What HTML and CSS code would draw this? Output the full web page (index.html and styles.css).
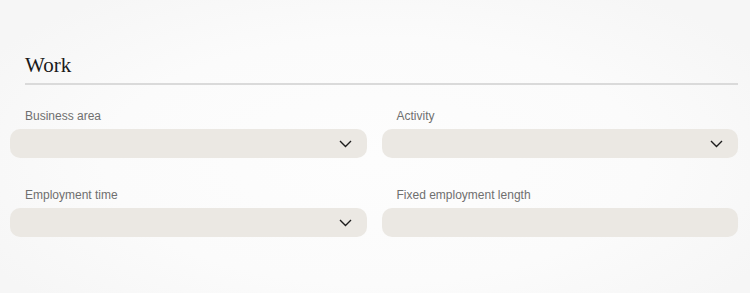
FILE: index.html
```html
<!DOCTYPE html>
<html lang="en">
<head>
    <meta charset="UTF-8">
    <meta name="viewport" content="width=device-width, initial-scale=1.0">
    <title>Work</title>
    <link rel="stylesheet" href="styles.css">
</head>
<body>
    <!-- Work section -->
    <div class="section">
        <h2 class="section-title">Work</h2>

        <div class="form-grid">
            <div class="field">
                <label class="field-label">Business area</label>
                <div class="field-input">
                    <svg class="chevron" viewBox="0 0 13 8" width="13" height="8"><path d="M1 1l5.5 5.5 5.5-5.5" fill="none" stroke="#1d1d1d" stroke-width="1.4"/></svg>
                </div>
            </div>
            <div class="field">
                <label class="field-label">Activity</label>
                <div class="field-input">
                    <svg class="chevron" viewBox="0 0 13 8" width="13" height="8"><path d="M1 1l5.5 5.5 5.5-5.5" fill="none" stroke="#1d1d1d" stroke-width="1.4"/></svg>
                </div>
            </div>
            <div class="field">
                <label class="field-label">Employment time</label>
                <div class="field-input">
                    <svg class="chevron" viewBox="0 0 13 8" width="13" height="8"><path d="M1 1l5.5 5.5 5.5-5.5" fill="none" stroke="#1d1d1d" stroke-width="1.4"/></svg>
                </div>
            </div>
            <div class="field">
                <label class="field-label">Fixed employment length</label>
                <div class="field-input"></div>
            </div>
        </div>
    </div>
</body>
</html>
```

FILE: styles.css
```css
* {
    box-sizing: border-box;
    margin: 0;
    padding: 0;
}

body {
    font-family: 'Liberation Sans', Arial, sans-serif;
    background: radial-gradient(ellipse 60% 70% at 50% 55%, #fdfdfd 0%, #fbfbfb 60%, #f6f6f6 100%);
    color: #1d1d1d;
    height: 293px;
    overflow: hidden;
}

/* Section */
.section {
    width: 728px;
    margin-left: 10px;
    padding-top: 53px;
}

.section-title {
    font-family: 'Liberation Serif', 'Times New Roman', serif;
    font-weight: normal;
    font-size: 21px;
    line-height: 24px;
    color: #1a1a1a;
    margin-left: 15px;
    padding-bottom: 6px;
    border-bottom: 2px solid #dadada;
}

/* Fields */
.form-grid {
    display: grid;
    grid-template-columns: 1fr 1fr;
    column-gap: 15px;
    row-gap: 30px;
    margin-top: 24px;
}

.field-label {
    display: block;
    font-size: 12px;
    line-height: 14px;
    color: #6f6f6f;
    margin-left: 15px;
    margin-bottom: 6px;
}

.field-input {
    height: 29px;
    border-radius: 10px;
    background: #ebe8e3;
    display: flex;
    align-items: center;
    justify-content: flex-end;
    padding-right: 15px;
}

.chevron {
    display: block;
}
```
